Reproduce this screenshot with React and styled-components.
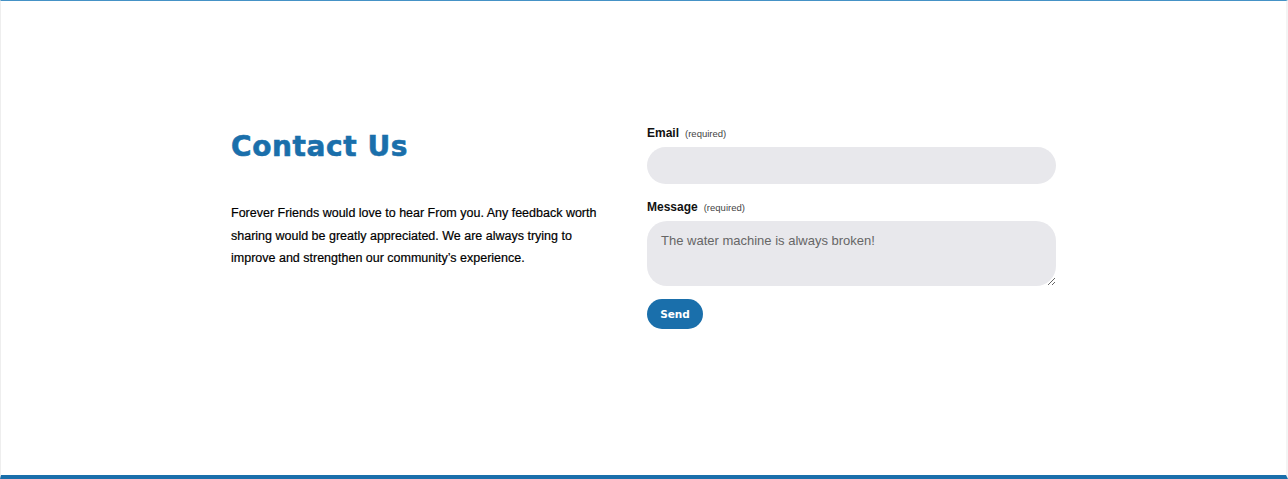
import styled, { createGlobalStyle } from "styled-components";

const GlobalStyle = createGlobalStyle`
  html, body {
    margin: 0;
    padding: 0;
    background: #fff;
  }
  body {
    font-family: "Liberation Sans", Arial, sans-serif;
  }
`;

const Frame = styled.div`
  box-sizing: border-box;
  height: 479px;
  border-top: 1px solid #4592c6;
  border-left: 1px solid #eeeeee;
  border-right: 2px solid #f4f4f4;
  border-bottom: 4px solid #1a6fab;
  padding-top: 122px;
`;

const Content = styled.div`
  width: 825px;
  margin: 0 auto;
  display: grid;
  grid-template-columns: 416px 409px;
`;

const Intro = styled.div`
  padding-right: 40px;
`;

const Heading = styled.h1`
  margin: 7px 0 0;
  font-family: "DejaVu Sans", "Liberation Sans", sans-serif;
  font-weight: bold;
  font-size: 28px;
  line-height: 34px;
  color: #1a6fab;
  letter-spacing: 0.6px;
  -webkit-text-stroke: 0.6px #1a6fab;
`;

const Blurb = styled.p`
  margin: 38px 0 0;
  font-size: 12.5px;
  line-height: 22.5px;
  color: #000;
  -webkit-text-stroke: 0.2px #000;
`;

const Form = styled.form`
  display: flex;
  flex-direction: column;
  padding-top: 3px;
`;

const Label = styled.label`
  display: flex;
  align-items: baseline;
  gap: 6px;
  font-size: 12px;
  font-weight: bold;
  color: #111;
  margin-bottom: 7px;

  small {
    font-size: 9.5px;
    font-weight: normal;
    color: #444;
  }
`;

const Field = styled.div`
  margin-bottom: ${(p) => p.$gap || 0}px;
`;

const TextInput = styled.input`
  box-sizing: border-box;
  display: block;
  width: 100%;
  height: 37px;
  border: 0;
  border-radius: 19px;
  background: #e8e8ec;
  padding: 0 14px;
  font-family: inherit;
  font-size: 13px;
  outline: none;
`;

const TextArea = styled.textarea`
  box-sizing: border-box;
  display: block;
  width: 100%;
  height: 65px;
  border: 0;
  border-radius: 20px;
  background: #e8e8ec;
  padding: 12px 14px;
  font-family: inherit;
  font-size: 13px;
  color: #666;
  outline: none;
  resize: vertical;
`;

const SendButton = styled.button`
  align-self: flex-start;
  width: 56px;
  height: 30px;
  border: 0;
  border-radius: 15px;
  background: #1a6fab;
  color: #fff;
  font-family: "DejaVu Sans", "Liberation Sans", sans-serif;
  font-weight: bold;
  font-size: 10.5px;
  cursor: pointer;
`;

export default function App() {
  return (
    <>
      <GlobalStyle />
      <Frame>
        <Content>
          <Intro>
            <Heading>Contact Us</Heading>
            <Blurb>
              Forever Friends would love to hear From you. Any feedback worth
              sharing would be greatly appreciated. We are always trying to
              improve and strengthen our community’s experience.
            </Blurb>
          </Intro>
          <Form onSubmit={(e) => e.preventDefault()}>
            <Field $gap={16}>
              <Label>
                Email <small>(required)</small>
              </Label>
              <TextInput type="email" />
            </Field>
            <Field $gap={13}>
              <Label>
                Message <small>(required)</small>
              </Label>
              <TextArea defaultValue="The water machine is always broken!" />
            </Field>
            <SendButton type="submit">Send</SendButton>
          </Form>
        </Content>
      </Frame>
    </>
  );
}
